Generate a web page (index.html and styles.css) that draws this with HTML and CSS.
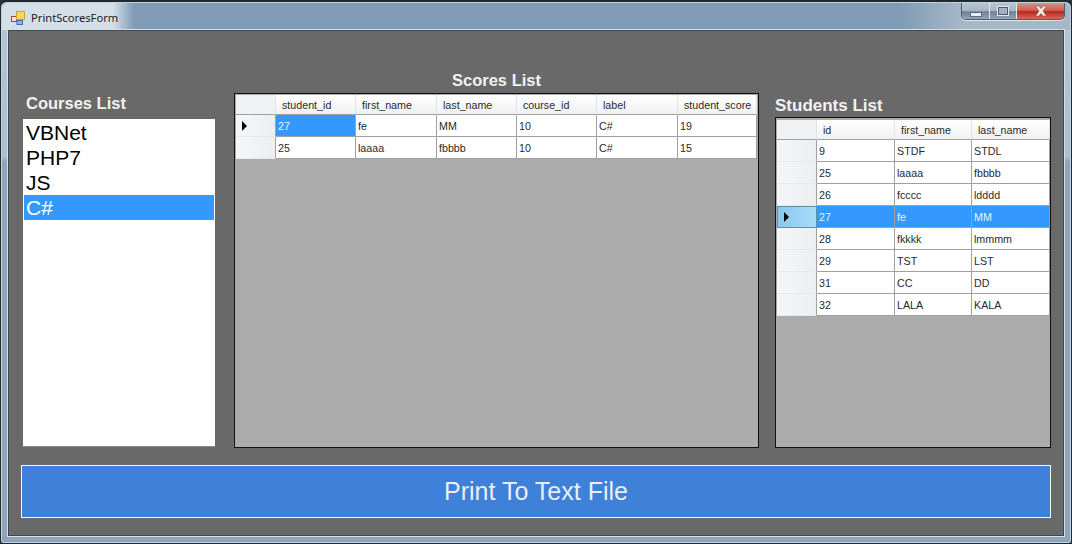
FILE: index.html
```html
<!DOCTYPE html>
<html lang="en">
<head>
<meta charset="utf-8">
<title>PrintScoresForm</title>
<link rel="stylesheet" href="styles.css">
</head>
<body>
<div class="window">
  <header class="titlebar">
    <div class="title-glow">
      <svg class="app-icon" width="14" height="14" viewBox="0 0 14 14">
        <rect x="0.5" y="5.5" width="5" height="5" fill="#f4e3d8" stroke="#c03a32"/>
        <rect x="5.5" y="0.5" width="8" height="8" fill="#f8d85a" stroke="#d0a030"/>
        <rect x="6" y="9.5" width="5.5" height="4" fill="#8fb4e6" stroke="#3c6cb4"/>
      </svg>
      <span class="title-text">PrintScoresForm</span>
    </div>
    <div class="controls">
      <div class="ctl ctl-min"><span class="min-glyph"></span></div>
      <div class="ctl ctl-max"><span class="max-glyph"></span></div>
      <div class="ctl ctl-close">
        <svg width="14" height="12" viewBox="0 0 14 12"><path d="M1.5 1h3.4L7 3.6 9.1 1h3.4L9 6l3.5 5H9.1L7 8.4 4.9 11H1.5L5 6z" fill="#f6ece8" stroke="#7a3a32" stroke-width=".5"/></svg>
      </div>
    </div>
  </header>
  <main class="form">
    <section class="panels">
      <div class="panel panel-courses">
        <h2 class="label">Courses List</h2>
        <ul class="listbox">
          <li>VBNet</li>
          <li>PHP7</li>
          <li>JS</li>
          <li class="selected">C#</li>
        </ul>
      </div>
      <div class="panel panel-scores">
        <h2 class="label label-center">Scores List</h2>
        <div class="grid grid-scores">
          <div class="head corner"></div>
          <div class="head">student_id</div><div class="head">first_name</div><div class="head">last_name</div><div class="head">course_id</div><div class="head">label</div><div class="head">student_score</div>
          <div class="rowhead"><span class="arrow"></span></div>
          <div class="cell cell-sel">27</div><div class="cell">fe</div><div class="cell">MM</div><div class="cell">10</div><div class="cell">C#</div><div class="cell">19</div>
          <div class="rowhead"></div>
          <div class="cell">25</div><div class="cell">laaaa</div><div class="cell">fbbbb</div><div class="cell">10</div><div class="cell">C#</div><div class="cell">15</div>
        </div>
      </div>
      <div class="panel panel-students">
        <h2 class="label">Students List</h2>
        <div class="grid grid-students">
          <div class="head corner"></div>
          <div class="head">id</div><div class="head">first_name</div><div class="head">last_name</div>
          <div class="rowhead"></div><div class="cell">9</div><div class="cell">STDF</div><div class="cell">STDL</div>
          <div class="rowhead"></div><div class="cell">25</div><div class="cell">laaaa</div><div class="cell">fbbbb</div>
          <div class="rowhead"></div><div class="cell">26</div><div class="cell">fcccc</div><div class="cell">ldddd</div>
          <div class="rowhead rowhead-sel"><span class="arrow"></span></div><div class="cell cell-sel">27</div><div class="cell cell-sel">fe</div><div class="cell cell-sel">MM</div>
          <div class="rowhead"></div><div class="cell">28</div><div class="cell">fkkkk</div><div class="cell">lmmmm</div>
          <div class="rowhead"></div><div class="cell">29</div><div class="cell">TST</div><div class="cell">LST</div>
          <div class="rowhead"></div><div class="cell">31</div><div class="cell">CC</div><div class="cell">DD</div>
          <div class="rowhead"></div><div class="cell">32</div><div class="cell">LALA</div><div class="cell">KALA</div>
        </div>
      </div>
    </section>
    <button class="print-btn" type="button">Print To Text File</button>
  </main>
</div>
</body>
</html>
```
FILE: styles.css
```css
* { box-sizing: border-box; }
html, body { margin: 0; padding: 0; }
body {
  width: 1072px;
  height: 544px;
  overflow: hidden;
  background: #2a3238;
  font-family: "Liberation Sans", Arial, sans-serif;
}
.window {
  width: 1072px;
  height: 544px;
  padding: 1px 7px 7px 7px;
  display: flex;
  flex-direction: column;
  background: linear-gradient(180deg, #b3c6d6 0, #a9bfd2 155px, #8da4bb 160px, #8da4bb 100%);
  border: 1px solid #1e2a30;
  border-top-width: 2px;
  border-radius: 7px 7px 3px 3px;
  box-shadow: inset 0 0 0 1px #c4d2de;
}
.titlebar {
  height: 27px;
  flex: none;
  display: flex;
  justify-content: space-between;
  align-items: flex-start;
  margin: 0 -6px;
  background: linear-gradient(90deg, #7f9bb5 0, #7f9bb5 84%, #a6b8c8 90%, #a6b8c8 100%);
  border-radius: 6px 6px 0 0;
}
.title-glow {
  display: flex;
  align-items: center;
  gap: 6px;
  width: 132px;
  height: 27px;
  padding: 2px 0 0 9px;
  background: linear-gradient(90deg, #d4dfe8 0, #d4dfe8 84%, rgba(212,223,232,0) 100%);
  border-radius: 6px 0 0 0;
}
.app-icon { flex: none; }
.title-text { font-size: 11.2px; font-family: "Noto Sans", sans-serif; color: #1c1c1c; white-space: nowrap; }
.controls {
  display: flex;
  height: 17px;
  margin-right: 5px;
  border: 1px solid #4a5c6e;
  border-top: none;
  border-radius: 0 0 5px 5px;
  overflow: hidden;
  box-shadow: 0 1px 0 #dde6ee;
}
.ctl { display: flex; align-items: center; justify-content: center; }
.ctl-min, .ctl-max {
  width: 28px;
  background: linear-gradient(180deg, #b6c6d4 0%, #a6b6c5 48%, #6e8094 55%, #93a5b6 100%);
  border-right: 1px solid #dfe7ee;
}
.ctl-max { width: 27px; }
.ctl-close {
  width: 47px;
  background: linear-gradient(180deg, #d9928a 0%, #cf5f52 45%, #b32a1e 55%, #d8685a 100%);
}
.min-glyph { width: 12px; height: 5px; margin-top: 7px; background: #e8eef3; border: 1px solid #5c6c7c; }
.max-glyph { width: 12px; height: 10px; background: #9fb0c0; border: 1px solid #e0e7ed; box-shadow: inset 0 0 0 1px #4c5c6c; }
.form {
  flex: 1;
  display: flex;
  flex-direction: column;
  padding: 0 12px 17px 12px;
  background: #696969;
  border: 1px solid #3d4a55;
  box-shadow: 0 0 0 1px #d5dfe8;
}
.panels {
  flex: 1;
  display: flex;
  align-items: flex-end;
  padding: 0 0 17px 2px;
}
.panel { display: flex; flex-direction: column; }
.panel-courses { width: 193px; margin-right: 19px; }
.panel-scores { width: 525px; margin-right: 16px; }
.panel-students { width: 276px; }
.label {
  margin: 0;
  font-size: 16.5px;
  line-height: 20px;
  font-weight: bold;
  color: #f2f2f2;
  white-space: nowrap;
}
.panel-courses .label { padding-left: 3px; margin-bottom: 6px; }
.panel-scores .label { margin-bottom: 3px; }
.panel-students .label { margin-bottom: 1px; font-size: 17px; }
.label-center { text-align: center; }
.listbox {
  list-style: none;
  margin: 0 0 1px;
  padding: 1px 1px 0 1px;
  height: 328px;
  background: #fff;
  border-bottom: 1px solid #8c8c8c;
  font-size: 21px;
  color: #000;
}
.listbox li { height: 25px; line-height: 25px; padding-left: 2px; }
.listbox .selected { background: #3399ff; color: #fff; }
.grid {
  display: grid;
  align-content: start;
  background: #ababab;
  border: 1px solid #111;
  padding: 1px;
  font-size: 10.7px;
  color: #2a2a2a;
}
.grid-scores {
  height: 355px;
  grid-template-columns: 40px 80px 81px 80px 80px 81px 79px;
  grid-template-rows: 20px 22px 22px;
}
.grid-students {
  height: 331px;
  grid-template-columns: 40px 78px 77px 78px;
  grid-template-rows: 20px repeat(8, 22px);
  padding-top: 2px;
}
.head {
  display: flex;
  align-items: center;
  padding-left: 6px;
  background: linear-gradient(180deg, #fff 0%, #f8f8f8 50%, #eef0f2 100%);
  border-right: 1px solid #e2e5e8;
  border-bottom: 1px solid #a0a0a0;
  white-space: nowrap;
}
.corner { background: #f0f1f3; }
.rowhead {
  display: flex;
  align-items: center;
  padding-left: 6px;
  background: linear-gradient(90deg, #f5f6f7, #eceef0);
  border-right: 1px solid #a0a0a0;
  border-bottom: 1px solid #e6e8ea;
}
.rowhead-sel {
  background: linear-gradient(90deg, #88c8ee, #a8dcf6);
  border: 1px solid #5f8ea8;
}
.arrow {
  width: 0;
  height: 0;
  border-left: 5px solid #000;
  border-top: 5px solid transparent;
  border-bottom: 5px solid transparent;
}
.cell {
  display: flex;
  align-items: center;
  padding-left: 2px;
  background: #fff;
  border-right: 1px solid #a0a0a0;
  border-bottom: 1px solid #a0a0a0;
  white-space: nowrap;
}
.cell-sel { background: #3399ff; color: #e8f4ff; }
.print-btn {
  flex: none;
  height: 53px;
  width: 1030px;
  margin-left: 0;
  background: #3f80d8;
  border: 1px solid #f4f8fc;
  color: #e8eef6;
  font-family: "Liberation Sans", Arial, sans-serif;
  font-size: 25px;
  padding: 0;
}
```
